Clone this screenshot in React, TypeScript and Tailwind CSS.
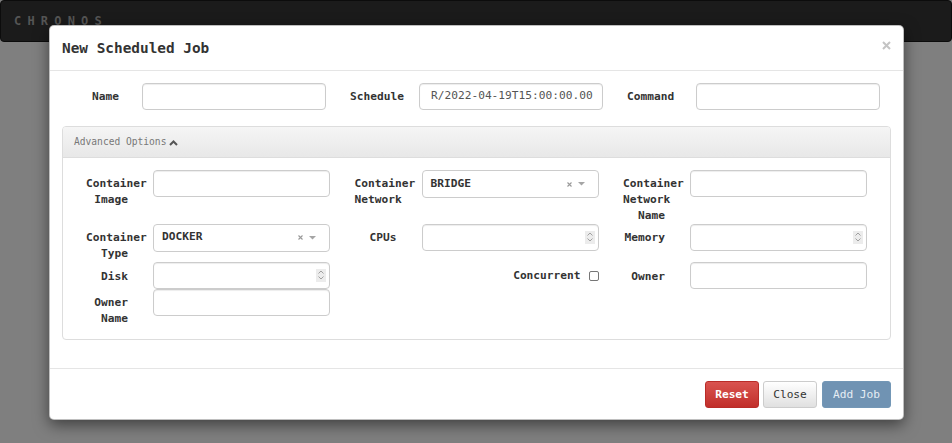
import React from "react";

const F = "font-['DejaVu_Sans_Mono','Liberation_Mono',monospace]";

function Spinner() {
  return (
    <div className="ml-auto mr-[3px] flex h-[13px] w-[10px] flex-col items-center justify-center gap-[2px] bg-[#ececec]">
      <svg width="6" height="4" viewBox="0 0 6 4">
        <polyline points="0.5,3.5 3,1 5.5,3.5" fill="none" stroke="#a0a0a0" strokeWidth="1" />
      </svg>
      <svg width="6" height="4" viewBox="0 0 6 4">
        <polyline points="0.5,0.5 3,3 5.5,0.5" fill="none" stroke="#a0a0a0" strokeWidth="1" />
      </svg>
    </div>
  );
}

function TextBox({ w = "w-[177px]", value, spinner }: { w?: string; value?: string; spinner?: boolean }) {
  return (
    <div
      className={`${w} flex h-[27px] shrink-0 items-center rounded-[4px] border border-[#cccccc] bg-white pl-[11px] text-[11.2px] text-[#555] shadow-[inset_0_1px_1px_rgba(0,0,0,0.075)]`}
    >
      {value && <span>{value}</span>}
      {spinner && <Spinner />}
    </div>
  );
}

function SelectBox({ value }: { value: string }) {
  return (
    <div className="flex h-[28px] w-[177px] shrink-0 items-center rounded-[4px] border border-[#cccccc] bg-white pl-[8px] pr-[13px] text-[11.2px]">
      <span className="font-bold text-[#333]">{value}</span>
      <svg className="ml-auto" width="5" height="5" viewBox="0 0 5 5">
        <path d="M0.5 0.5 L4.5 4.5 M4.5 0.5 L0.5 4.5" stroke="#999" strokeWidth="1.1" />
      </svg>
      <svg className="ml-[6px]" width="7" height="4" viewBox="0 0 7 4">
        <polygon points="0,0 7,0 3.5,3.5" fill="#a5a5a5" />
      </svg>
    </div>
  );
}

function Field({ label, children, pt = "pt-[5.5px]" }: { label: string; children: React.ReactNode; pt?: string }) {
  return (
    <div className="flex items-start gap-[25px]">
      <div className={`w-[42px] shrink-0 ${pt} text-right text-[11.2px] font-bold leading-4 text-[#333]`}>{label}</div>
      {children}
    </div>
  );
}

function TopField({ label, value }: { label: string; value?: string }) {
  return (
    <div className="flex items-start gap-[23px]">
      <div className="w-[46px] shrink-0 pt-[5.5px] text-right text-[11.2px] font-bold leading-4 text-[#333]">
        {label}
      </div>
      <TextBox w="w-[184px]" value={value} />
    </div>
  );
}

export default function App() {
  return (
    <div className={`relative h-[443px] w-full overflow-hidden bg-[#7f7f7f] ${F}`}>
      <div className="flex h-[42px] items-center rounded-[4px] border border-[#0c0c0c] bg-[#1b1b1b] pl-[13px]">
        <span className="text-[12px] font-bold tracking-[6.2px] text-[#555]">CHRONOS</span>
      </div>

      <div className="absolute left-[49px] top-[25px] w-[855px] rounded-[5px] border border-[rgba(0,0,0,0.25)] bg-white shadow-[0_5px_15px_rgba(0,0,0,0.5)]">
        <div className="flex h-[45px] items-center border-b border-[#e5e5e5] px-[12px]">
          <h4 className="text-[14.4px] font-bold leading-[21px] text-[#333]">New Scheduled Job</h4>
          <svg className="ml-auto mt-[-6px]" width="9" height="9" viewBox="0 0 9 9">
            <path d="M1 1 L8 8 M8 1 L1 8" stroke="#c4c4c4" strokeWidth="2" />
          </svg>
        </div>

        <div className="px-[12px] pb-[12px] pt-[12px]">
          <div className="ml-[11px] grid grid-cols-[253px_253px_253px] gap-x-[24px]">
            <TopField label="Name" />
            <TopField label="Schedule" value="R/2022-04-19T15:00:00.00" />
            <TopField label="Command" />
          </div>

          <div className="mb-[16px] mt-[16px] overflow-hidden rounded-[4px] border border-[#dddddd]">
            <div className="flex h-[31px] items-center border-b border-[#dddddd] bg-gradient-to-b from-[#f5f5f5] to-[#e8e8e8] px-[11px] pt-[1px] text-[9.6px] text-[#777]">
              <span>Advanced Options</span>
              <svg className="ml-[3px]" width="9" height="6" viewBox="0 0 9 6">
                <polyline points="1,5 4.5,1.5 8,5" fill="none" stroke="#555" strokeWidth="2" />
              </svg>
            </div>
            <div className="pb-[12px] pl-[23px] pt-[12px]">
              <div className="grid grid-cols-[244px_244px_244px] items-start gap-x-[24.5px]">
                <Field label="Container Image">
                  <TextBox />
                </Field>
                <Field label="Container Network">
                  <SelectBox value="BRIDGE" />
                </Field>
                <Field label="Container Network Name">
                  <TextBox />
                </Field>
              </div>
              <div className="grid grid-cols-[244px_244px_244px] items-start gap-x-[24.5px]">
                <Field label="Container Type" pt="pt-[6px]">
                  <SelectBox value="DOCKER" />
                </Field>
                <Field label="CPUs" pt="pt-[6.5px]">
                  <TextBox spinner />
                </Field>
                <Field label="Memory" pt="pt-[6.5px]">
                  <TextBox spinner />
                </Field>
              </div>
              <div className="grid grid-cols-[244px_244px_244px] items-start gap-x-[24.5px]">
                <Field label="Disk" pt="pt-[7px]">
                  <TextBox spinner />
                </Field>
                <div className="flex h-[27px] items-center justify-end pt-[2px] text-[11.2px] font-bold text-[#333]">
                  <span>Concurrent</span>
                  <span className="ml-[8px] inline-block h-[10px] w-[10px] rounded-[2px] border border-[#767676] bg-white" />
                </div>
                <Field label="Owner" pt="pt-[7px]">
                  <TextBox />
                </Field>
              </div>
              <div className="grid grid-cols-[244px_244px_244px] items-start gap-x-[24.5px]">
                <Field label="Owner Name" pt="pt-[6px]">
                  <TextBox />
                </Field>
              </div>
            </div>
          </div>
        </div>

        <div className="flex justify-end border-t border-[#e5e5e5] px-[12px] pb-[11px] pt-[12px] text-[11.2px]">
          <button className="flex h-[27px] w-[54px] items-center justify-center rounded-[3px] border border-[#b92c28] bg-gradient-to-b from-[#d9534f] to-[#c12e2a] pt-[2px] font-bold text-white">
            Reset
          </button>
          <button className="ml-[4px] flex h-[27px] w-[54px] items-center justify-center rounded-[3px] border border-[#cccccc] bg-gradient-to-b from-[#ffffff] to-[#e0e0e0] pt-[2px] text-[#333]">
            Close
          </button>
          <button className="ml-[5px] flex h-[27px] w-[69px] items-center justify-center rounded-[3px] border border-[#7397b6] bg-[#7093b3] pt-[2px] text-[#e6edf3]">
            Add Job
          </button>
        </div>
      </div>
    </div>
  );
}
